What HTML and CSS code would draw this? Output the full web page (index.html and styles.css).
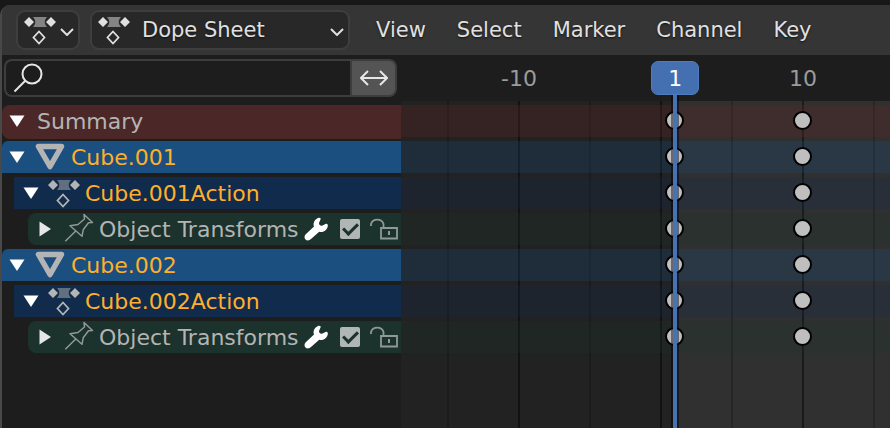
FILE: index.html
```html
<!DOCTYPE html>
<html lang="en">
<head>
  <meta charset="UTF-8">
  <meta name="viewport" content="width=device-width, initial-scale=1.0">
  <title>Dope Sheet</title>
  <link rel="stylesheet" href="styles.css">
</head>
<body>
  <!-- shared icons -->
  <svg class="sprite" aria-hidden="true">
    <symbol id="i-action" viewBox="0 0 36 32">
      <path d="M11 3h14c-3 3-3 7 0 10H11c3-3 3-7 0-10z" fill="currentColor" opacity=".5"/>
      <path d="M7 3l5 5-5 5-5-5zM29 3l5 5-5 5-5-5z" fill="currentColor"/>
      <path d="M17 17.5l5.5 6-5.5 6-5.5-6z" fill="none" stroke="currentColor" stroke-width="1.8"/>
    </symbol>
    <symbol id="i-mesh" viewBox="0 0 36 32">
      <path d="M6.500 5.500h23L18 25.500z" fill="none" stroke="currentColor" stroke-width="5.500" stroke-linejoin="round"/>
    </symbol>
    <symbol id="i-pin" viewBox="0 0 36 32">
      <path d="M5.300 28.300L15.500 18.300M10 12.700l8-1.200 6.500-5.500-.5-4.500 8.500 8-4 .3-5.300 7-1.200 6.500z" fill="none" stroke="currentColor" stroke-width="1.500" stroke-linejoin="round"/>
    </symbol>
    <symbol id="i-down" viewBox="0 0 16 12"><path d="M.5.5h15L8 12z" fill="currentColor"/></symbol>
    <symbol id="i-right" viewBox="0 0 12 16"><path d="M.5.500L12 8 .5 15.500z" fill="currentColor"/></symbol>
    <symbol id="i-chevron" viewBox="0 0 14 8"><path d="M1 1l6 6 6-6" fill="none" stroke="currentColor" stroke-width="2"/></symbol>
    <symbol id="i-wrench" viewBox="0 0 24 24">
      <path d="M14 1c1.500-.6 3.500.3 2.500 1.500L15 6c0 2 1.500 3 3 2.700l4-2c1.500-.4 2 1 1.800 2.600-.4 3-2.800 5.300-5.600 5.700-1 .1-2 0-3-.2L7 22c-1.500 1.500-4 2-5.500.5S.3 19 1.500 17.500L10 9.500C8.800 6 10.500 2.500 14 1z" fill="currentColor"/>
    </symbol>
    <symbol id="i-unlock" viewBox="0 0 28 24">
      <path d="M1 9V7a6.500 6 0 0 1 12.500 0v4M11 11h16v10.500H11z" fill="none" stroke="currentColor" stroke-width="1.800"/>
      <path d="M19 14v4" stroke="currentColor" stroke-width="2"/>
    </symbol>
  </svg>

  <main class="editor">
    <header class="header">
      <button class="field editor-type" type="button" aria-label="Editor type">
        <svg class="icon"><use href="#i-action"/></svg>
        <svg class="chevron"><use href="#i-chevron"/></svg>
      </button>
      <div class="field mode">
        <svg class="icon"><use href="#i-action"/></svg>
        <select aria-label="Mode">
          <option>Dope Sheet</option>
        </select>
        <svg class="chevron"><use href="#i-chevron"/></svg>
      </div>
      <nav class="menus">
        <button type="button">View</button>
        <button type="button">Select</button>
        <button type="button">Marker</button>
        <button type="button">Channel</button>
        <button type="button">Key</button>
      </nav>
    </header>

    <div class="content">
      <section class="channels">
        <div class="search">
          <label class="search-box">
            <svg viewBox="0 0 32 32"><circle cx="20" cy="12" r="9.500"/><path d="M13 19L2.500 29.500"/></svg>
            <input type="text" aria-label="Filter channels">
          </label>
          <button type="button" class="invert" aria-label="Invert filter">
            <svg viewBox="0 0 28 16"><path d="M1 8h26M8 1L1 8l7 7M20 1l7 7-7 7"/></svg>
          </button>
        </div>

        <ul class="rows">
          <li class="row summary">
            <button class="expand" type="button" aria-label="Collapse"><svg class="down"><use href="#i-down"/></svg></button>
            <span class="name">Summary</span>
          </li>
          <li class="row object">
            <button class="expand" type="button" aria-label="Collapse"><svg class="down"><use href="#i-down"/></svg></button>
            <svg class="icon"><use href="#i-mesh"/></svg>
            <span class="name">Cube.001</span>
          </li>
          <li class="row action">
            <button class="expand" type="button" aria-label="Collapse"><svg class="down"><use href="#i-down"/></svg></button>
            <svg class="icon"><use href="#i-action"/></svg>
            <span class="name">Cube.001Action</span>
          </li>
          <li class="row group">
            <button class="expand" type="button" aria-label="Expand"><svg class="right"><use href="#i-right"/></svg></button>
            <svg class="icon"><use href="#i-pin"/></svg>
            <span class="name">Object Transforms</span>
            <span class="tools">
              <button type="button" aria-label="Modifiers"><svg class="wrench"><use href="#i-wrench"/></svg></button>
              <input type="checkbox" aria-label="Enable channel" checked>
              <button type="button" aria-label="Lock"><svg class="lock"><use href="#i-unlock"/></svg></button>
            </span>
          </li>
          <li class="row object">
            <button class="expand" type="button" aria-label="Collapse"><svg class="down"><use href="#i-down"/></svg></button>
            <svg class="icon"><use href="#i-mesh"/></svg>
            <span class="name">Cube.002</span>
          </li>
          <li class="row action">
            <button class="expand" type="button" aria-label="Collapse"><svg class="down"><use href="#i-down"/></svg></button>
            <svg class="icon"><use href="#i-action"/></svg>
            <span class="name">Cube.002Action</span>
          </li>
          <li class="row group">
            <button class="expand" type="button" aria-label="Expand"><svg class="right"><use href="#i-right"/></svg></button>
            <svg class="icon"><use href="#i-pin"/></svg>
            <span class="name">Object Transforms</span>
            <span class="tools">
              <button type="button" aria-label="Modifiers"><svg class="wrench"><use href="#i-wrench"/></svg></button>
              <input type="checkbox" aria-label="Enable channel" checked>
              <button type="button" aria-label="Lock"><svg class="lock"><use href="#i-unlock"/></svg></button>
            </span>
          </li>
        </ul>
      </section>

      <section class="timeline">
        <div class="ruler">
          <span class="tick" style="--frame: -10">-10</span>
          <span class="tick" style="--frame: 10">10</span>
        </div>
        <div class="sheet">
          <i class="range"></i>
          <i class="line" style="--frame: -15"></i>
          <i class="line major" style="--frame: -10"></i>
          <i class="line" style="--frame: -5"></i>
          <i class="line major" style="--frame: 0"></i>
          <i class="line" style="--frame: 5"></i>
          <i class="line major" style="--frame: 10"></i>
          <i class="line" style="--frame: 15"></i>
          <div class="track t-summary"><i class="key" style="--frame: 1"></i><i class="key" style="--frame: 10"></i></div>
          <div class="track t-object"><i class="key" style="--frame: 1"></i><i class="key" style="--frame: 10"></i></div>
          <div class="track t-action"><i class="key" style="--frame: 1"></i><i class="key" style="--frame: 10"></i></div>
          <div class="track t-group"><i class="key" style="--frame: 1"></i><i class="key" style="--frame: 10"></i></div>
          <div class="track t-object"><i class="key" style="--frame: 1"></i><i class="key" style="--frame: 10"></i></div>
          <div class="track t-action"><i class="key" style="--frame: 1"></i><i class="key" style="--frame: 10"></i></div>
          <div class="track t-group"><i class="key" style="--frame: 1"></i><i class="key" style="--frame: 10"></i></div>
        </div>
        <div class="playhead" style="--frame: 1"><span>1</span></div>
      </section>
    </div>
  </main>
</body>
</html>
```
FILE: styles.css
```css
*, *::before, *::after { box-sizing: border-box; }
body {
  margin: 0;
  height: 100vh;
  padding-top: 5px;
  display: flex;
  background: #181818;
  color: #e0e0e0;
  font: 22px/32px "DejaVu Sans", sans-serif;
  overflow: hidden;
}
button, input, select { font: inherit; color: inherit; }
button { padding: 0; border: none; background: none; cursor: pointer; }
svg { display: block; flex: none; }
.sprite { position: absolute; width: 0; height: 0; }
.icon { width: 36px; height: 32px; }

.editor {
  flex: 1;
  min-width: 0;
  display: flex;
  flex-direction: column;
  border-left: 2px solid #484848;
  border-top-left-radius: 10px;
  background: #1d1d1d;
}

/* header */
.header {
  display: flex;
  align-items: center;
  height: 50px;
  padding-left: 14px;
  background: #353535;
  border-top-left-radius: 8px;
  font-size: 21px;
  text-shadow: 0 1px 2px #111;
}
.field {
  display: flex;
  align-items: center;
  height: 40px;
  border: 2px solid #3e3e3e;
  border-radius: 9px;
  background: #282828;
}
.chevron { width: 14px; height: 8px; margin-top: 3px; }
.editor-type { width: 64px; padding: 0 4px; justify-content: space-between; }
.mode { width: 260px; margin-left: 10px; padding: 0 4px; }
.mode select {
  flex: 1;
  min-width: 0;
  margin-left: 10px;
  padding: 0;
  border: none;
  outline: none;
  appearance: none;
  background: transparent;
  text-shadow: inherit;
}
.menus { display: flex; gap: 31px; margin-left: 26px; }
.menus button { text-shadow: inherit; }

.content { flex: 1; min-height: 0; display: flex; }

/* channel list */
.channels { flex: none; width: 399px; }
.search { display: flex; padding: 4px 4px 8px 2px; }
.search-box {
  flex: 1;
  min-width: 0;
  display: flex;
  align-items: center;
  height: 38px;
  padding-left: 6px;
  border: 2px solid #3d3d3d;
  border-right: none;
  border-radius: 8px 0 0 8px;
}
.search svg { fill: none; stroke: #e6e6e6; stroke-width: 2; }
.search-box svg { width: 32px; height: 32px; }
.search-box input {
  flex: 1;
  min-width: 0;
  border: none;
  outline: none;
  background: transparent;
}
.invert {
  width: 47px;
  display: flex;
  align-items: center;
  justify-content: center;
  border: 2px solid #3d3d3d;
  border-radius: 0 8px 8px 0;
  background: #545454;
}
.invert svg { width: 28px; height: 16px; }

.rows { margin: 0; padding: 0; list-style: none; }
.row {
  display: flex;
  align-items: center;
  height: 32px;
  margin-bottom: 4px;
  color: #b4b4b4;
}
.expand {
  width: 30px;
  height: 32px;
  display: flex;
  align-items: center;
  justify-content: center;
  color: #fff;
}
.down { width: 16px; height: 12px; }
.right { width: 12px; height: 16px; color: #e6e6e6; }
.name { margin-left: 3px; padding-top: 2px; white-space: nowrap; }
.summary { height: 34px; margin-bottom: 2px; background: #4c2727; border-radius: 8px 0 0 8px; }
.summary .name { margin-left: 5px; padding-top: 0; }
.summary .expand { height: 34px; padding-bottom: 2px; }
.object { background: #1a4f80; border-top-left-radius: 6px; }
.action { margin-left: 12px; padding-left: 2px; background: #102b4b; }
.group { margin-left: 26px; padding-left: 2px; background: #1c322c; border-radius: 8px 0 0 8px; }
.object .name, .action .name { color: #ffaf29; }
.group .icon, .lock { color: #8f9a97; }

.tools { display: flex; align-items: center; margin: 0 3px 0 auto; }
.wrench { width: 24px; height: 24px; color: #fff; }
.lock { width: 28px; height: 24px; }
.tools input {
  appearance: none;
  display: grid;
  place-items: center;
  width: 20px;
  height: 20px;
  margin: 0 10px 0 12px;
  border-radius: 2px;
  background: #b0b6b5;
}
.tools input:checked::before {
  content: "";
  width: 15px;
  height: 9px;
  border: solid #1c322c;
  border-width: 0 0 3px 3px;
  transform: translateY(-2px) rotate(-45deg);
}

/* timeline, --frame places an item on the time axis */
.timeline {
  --origin: 260px;
  --step: 71px / 5;
  position: relative;
  flex: 1;
  min-width: 0;
  display: flex;
  flex-direction: column;
  overflow: hidden;
}
.ruler { position: relative; height: 46px; color: #9b9b9b; }
.tick, .line, .key, .playhead {
  position: absolute;
  left: calc(var(--origin) + var(--frame) * var(--step));
}
.tick { top: 8px; transform: translateX(-50%); }
.sheet { position: relative; flex: 1; padding-top: 4px; background: #222; }
.range {
  position: absolute;
  inset: 0 0 0 calc(var(--origin) + var(--step));
  background: #303030;
}
.line { top: 0; bottom: 0; width: 2px; margin-left: -1px; background: rgba(0, 0, 0, .2); }
.major { background: rgba(0, 0, 0, .45); }
.track { position: relative; height: 32px; margin-bottom: 4px; }
.t-summary { background: rgba(100, 41, 41, .3); }
.t-object { background: rgba(24, 75, 127, .25); }
.t-action { background: rgba(16, 43, 80, .25); }
.t-group { background: rgba(28, 50, 44, .25); }
.key {
  top: 6px;
  width: 19px;
  height: 19px;
  margin-left: -10px;
  border: 2px solid #000;
  border-radius: 50%;
  background: #bfbfbf;
}
.playhead {
  top: 6px;
  bottom: 0;
  width: 48px;
  margin-left: -24px;
  display: flex;
  flex-direction: column;
  align-items: center;
  color: #fff;
}
.playhead span {
  width: 48px;
  height: 34px;
  padding-top: 1px;
  border: 1px solid #4f7cbc;
  border-radius: 7px;
  background: #446fb0;
  text-align: center;
}
.playhead::after {
  content: "";
  flex: 1;
  width: 8px;
  border: solid rgba(0, 0, 0, .45);
  border-width: 0 2px;
  background: #4772b3;
  background-clip: padding-box;
}
```
